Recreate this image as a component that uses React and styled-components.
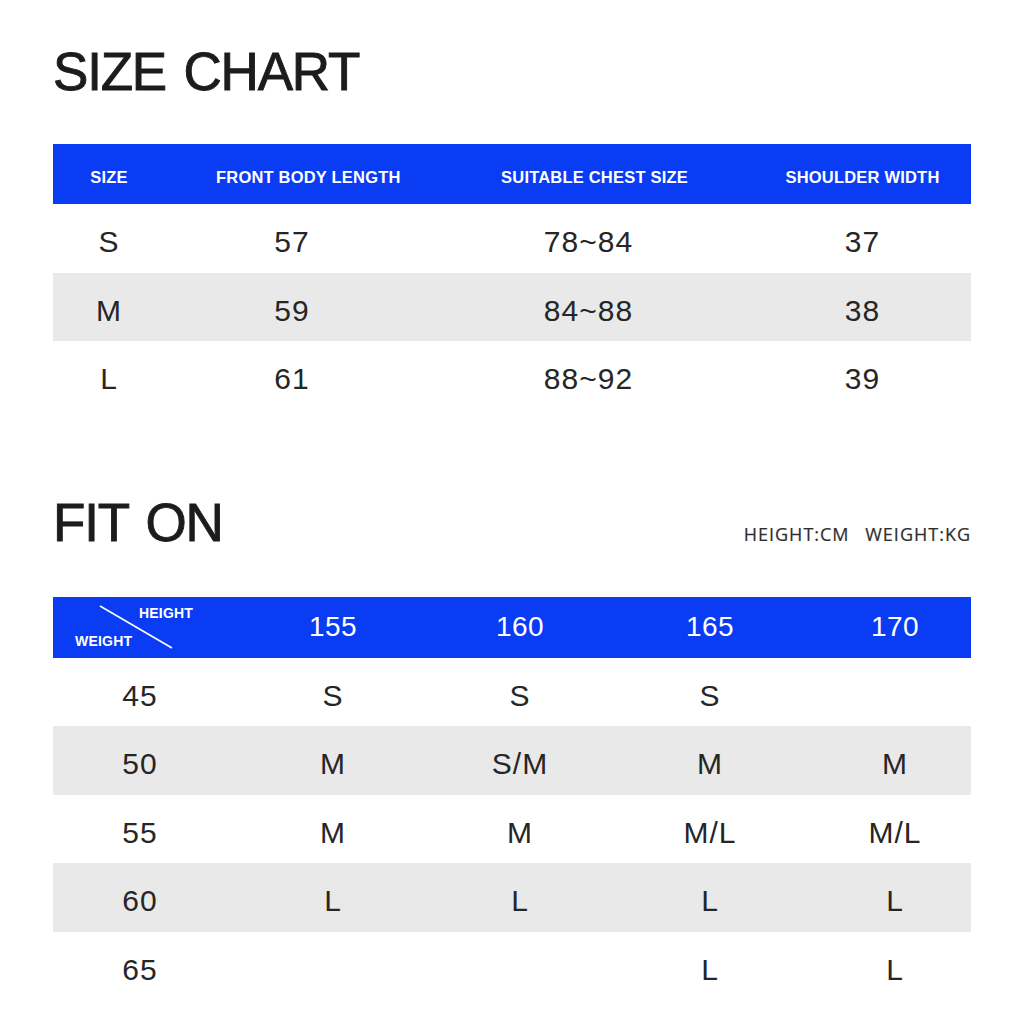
import styled, { createGlobalStyle } from "styled-components";

const GlobalStyle = createGlobalStyle`
  body {
    margin: 0;
    background: #ffffff;
    font-family: "Liberation Sans", Arial, sans-serif;
  }
`;

// P A G E
const Page = styled.div`
  width: 1024px;
  height: 1024px;
  box-sizing: border-box;
  padding: 37px 53px 0 53px;
  background: #fff;
  overflow: hidden;
`;

const TitleRow = styled.div`
  display: flex;
  justify-content: space-between;
  align-items: flex-end;
  margin-top: ${({ top }) => top || 0}px;
  margin-bottom: ${({ bottom }) => bottom || 0}px;
`;

const Title = styled.h1`
  margin: 0;
  font-family: "Liberation Sans", Arial, sans-serif;
  font-weight: 400;
  font-size: 53px;
  line-height: 70px;
  letter-spacing: -1.2px;
  word-spacing: 4px;
  color: #1c1c1c;
  -webkit-text-stroke: 0.9px #1c1c1c;
`;

const Units = styled.div`
  font-family: "Open Sans", "Noto Sans", sans-serif;
  font-size: 18px;
  letter-spacing: 1px;
  color: #2e2e2e;
  margin-bottom: 12px;
  word-spacing: 10px;
  -webkit-text-stroke: 0.2px #2e2e2e;
`;

// T A B L E
const Table = styled.div`
  display: grid;
  grid-template-columns: ${({ cols }) => cols};
`;

const HeadCell = styled.div`
  height: ${({ h }) => h || 60}px;
  background: #0a3cf4;
  color: #fff;
  display: flex;
  align-items: center;
  justify-content: center;
  font-size: ${({ big }) => (big ? "28px" : "16.5px")};
  font-weight: ${({ big }) => (big ? 400 : 700)};
  letter-spacing: ${({ big }) => (big ? "0.5px" : "0.2px")};
  padding-top: ${({ big }) => (big ? 0 : 6)}px;
  box-sizing: border-box;
  white-space: nowrap;
`;

const Cell = styled.div`
  height: 68.5px;
  box-sizing: border-box;
  padding-top: 8px;
  display: flex;
  align-items: center;
  justify-content: center;
  background: ${({ shade }) => (shade ? "#e9e9e9" : "#fff")};
  color: #262626;
  font-size: 30px;
  letter-spacing: 1px;
`;

const DiagCell = styled(HeadCell)`
  position: relative;
  padding: 0;
`;

const DiagLabel = styled.span`
  position: absolute;
  font-size: 14px;
  font-weight: 700;
  letter-spacing: 0.2px;
  left: ${({ x }) => x}px;
  top: ${({ y }) => y}px;
`;

const DiagLine = styled.svg`
  position: absolute;
  left: 0;
  top: 0;
`;

const sizeRows = [
  ["S", "57", "78~84", "37"],
  ["M", "59", "84~88", "38"],
  ["L", "61", "88~92", "39"],
];

const fitRows = [
  ["45", "S", "S", "S", ""],
  ["50", "M", "S/M", "M", "M"],
  ["55", "M", "M", "M/L", "M/L"],
  ["60", "L", "L", "L", "L"],
  ["65", "", "", "L", "L"],
];

const sizeCols = "112px 270px 319px 1fr";
const fitCols = "174px 212px 162px 218px 1fr";

export default function App() {
  return (
    <Page>
      <GlobalStyle />
      <TitleRow bottom={37}>
        <Title>SIZE CHART</Title>
      </TitleRow>
      <Table cols={sizeCols}>
        <HeadCell>SIZE</HeadCell>
        <HeadCell style={{ justifyContent: "flex-start", paddingLeft: 51 }}>
          FRONT BODY LENGTH
        </HeadCell>
        <HeadCell>SUITABLE CHEST SIZE</HeadCell>
        <HeadCell>SHOULDER WIDTH</HeadCell>
        {sizeRows.map((row, i) =>
          row.map((v, j) => (
            <Cell
              key={`${i}-${j}`}
              shade={i % 2 === 1}
              style={j === 1 ? { paddingRight: 16 } : j === 2 ? { paddingRight: 12 } : undefined}
            >
              {v}
            </Cell>
          ))
        )}
      </Table>

      <TitleRow top={78} bottom={39}>
        <Title>FIT ON</Title>
        <Units>HEIGHT:CM WEIGHT:KG</Units>
      </TitleRow>
      <Table cols={fitCols}>
        <DiagCell h={61}>
          <DiagLine width="174" height="61">
            <line x1="47" y1="9" x2="119" y2="51" stroke="#fff" strokeWidth="1.6" />
          </DiagLine>
          <DiagLabel x={86} y={8}>HEIGHT</DiagLabel>
          <DiagLabel x={22} y={36}>WEIGHT</DiagLabel>
        </DiagCell>
        {["155", "160", "165", "170"].map((h) => (
          <HeadCell key={h} big h={61}>
            {h}
          </HeadCell>
        ))}
        {fitRows.map((row, i) =>
          row.map((v, j) => (
            <Cell key={`${i}-${j}`} shade={i % 2 === 1}>
              {v}
            </Cell>
          ))
        )}
      </Table>
    </Page>
  );
}
